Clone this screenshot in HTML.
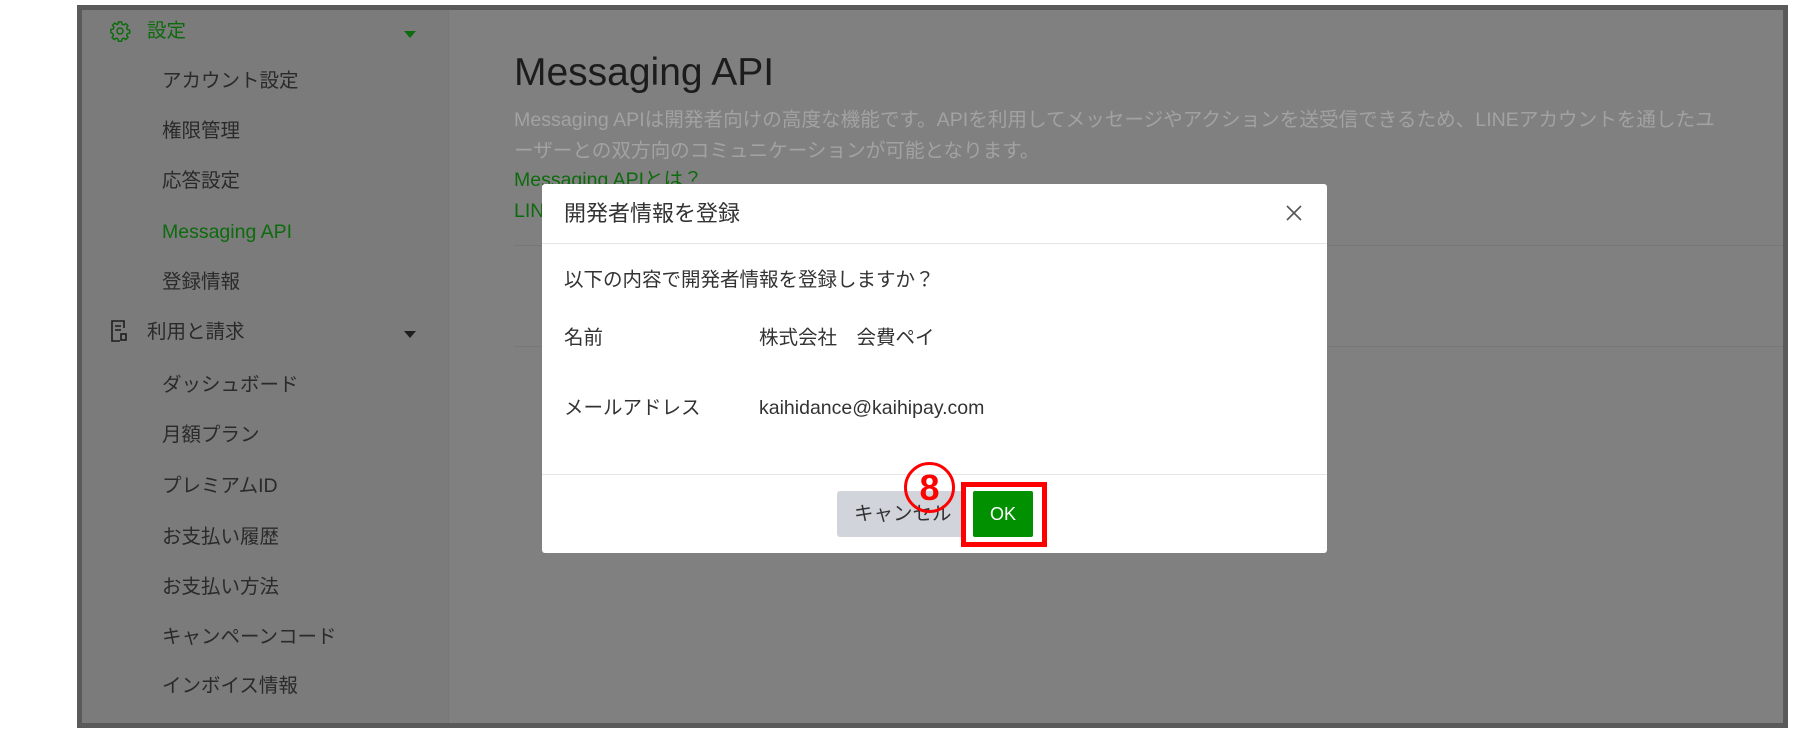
<!DOCTYPE html>
<html><head><meta charset="utf-8"><style>
*{margin:0;padding:0;box-sizing:border-box}
body{width:1802px;height:735px;background:#fff;position:relative;overflow:hidden;font-family:"Liberation Sans","Noto Sans CJK JP",sans-serif}
.frame{position:absolute;left:77px;top:5px;width:1711px;height:723px;border:5px solid #5a5a5a;background:#808080;overflow:hidden}
.side{position:absolute;left:0;top:0;width:367px;height:100%;background:#7b7b7b;border-right:1px solid #777}
.a{position:absolute;font-size:19.5px;color:#2a2a2a;white-space:nowrap;line-height:24px}
.g{color:#0d6b0d}
.caret{position:absolute;width:0;height:0;border-left:6px solid transparent;border-right:6px solid transparent;border-top:7px solid #0d6b0d}
.caret.k{border-top-color:#1e1e1e}
.abs{position:absolute}
.m{color:#333;font-size:19.5px}
</style></head><body>
<div class="frame">
 <div class="side">
  <svg class="abs" style="left:27px;top:10px" width="22" height="22" viewBox="0 0 24 24" fill="none" stroke="#0d6b0d" stroke-width="1.6" stroke-linejoin="round"><path d="M10.3 2h3.4l.5 2.6 1.9.8 2.2-1.5 2.4 2.4-1.5 2.2.8 1.9 2.6.5v3.4l-2.6.5-.8 1.9 1.5 2.2-2.4 2.4-2.2-1.5-1.9.8-.5 2.6h-3.4l-.5-2.6-1.9-.8-2.2 1.5-2.4-2.4 1.5-2.2-.8-1.9L2 13.7v-3.4l2.6-.5.8-1.9-1.5-2.2 2.4-2.4 2.2 1.5 1.9-.8z"/><circle cx="12" cy="12" r="3.3"/></svg>
  <div class="a g" style="left:65px;top:9px">設定</div>
  <div class="caret" style="left:322px;top:21px"></div>
  <div class="a" style="left:80px;top:59px">アカウント設定</div>
  <div class="a" style="left:80px;top:109px">権限管理</div>
  <div class="a" style="left:80px;top:159px">応答設定</div>
  <div class="a g" style="left:80px;top:210px">Messaging API</div>
  <div class="a" style="left:80px;top:260px">登録情報</div>
  <svg class="abs" style="left:28px;top:309px" width="18" height="24" viewBox="0 0 18 24" fill="none" stroke="#1e1e1e" stroke-width="1.6"><path d="M14 9V2H2v20h8"/><path d="M5 7h6M5 11h6"/><rect x="11" y="15" width="5" height="6"/></svg>
  <div class="a" style="left:65px;top:310px">利用と請求</div>
  <div class="caret k" style="left:322px;top:321px"></div>
  <div class="a" style="left:80px;top:363px">ダッシュボード</div>
  <div class="a" style="left:80px;top:413px">月額プラン</div>
  <div class="a" style="left:80px;top:464px">プレミアムID</div>
  <div class="a" style="left:80px;top:515px">お支払い履歴</div>
  <div class="a" style="left:80px;top:565px">お支払い方法</div>
  <div class="a" style="left:80px;top:615px">キャンペーンコード</div>
  <div class="a" style="left:80px;top:664px">インボイス情報</div>
 </div>
 <div class="a" style="left:432px;top:40px;font-size:39px;line-height:46px;color:#1c1c1c">Messaging API</div>
 <div class="a" style="left:432px;top:95px;color:#a2a2a2;line-height:31px;font-size:19.6px">Messaging APIは開発者向けの高度な機能です。APIを利用してメッセージやアクションを送受信できるため、LINEアカウントを通したユ<br>ーザーとの双方向のコミュニケーションが可能となります。</div>
 <div class="a g" style="left:432px;top:158px">Messaging APIとは？</div>
 <div class="a g" style="left:432px;top:189px">LINE</div>
 <div class="abs" style="left:432px;top:235px;width:1290px;height:1px;background:#777"></div>
 <div class="abs" style="left:432px;top:336px;width:1290px;height:1px;background:#777"></div>
</div>
<div class="abs" style="left:542px;top:184px;width:785px;height:369px;background:#fff;border-radius:3px">
 <div class="a" style="left:22px;top:16px;font-size:22px;line-height:28px;color:#333">開発者情報を登録</div>
 <svg class="abs" style="left:744px;top:21px" width="16" height="16" viewBox="0 0 16 16" stroke="#555" stroke-width="1.6"><path d="M1 1l14 14M15 1L1 15"/></svg>
 <div class="abs" style="left:0;top:59px;width:100%;height:1px;background:#e6e6e6"></div>
 <div class="a m" style="left:22px;top:84px">以下の内容で開発者情報を登録しますか？</div>
 <div class="a m" style="left:22px;top:142px">名前</div>
 <div class="a m" style="left:217px;top:142px">株式会社　会費ペイ</div>
 <div class="a m" style="left:22px;top:212px">メールアドレス</div>
 <div class="a m" style="left:217px;top:212px">kaihidance@kaihipay.com</div>
 <div class="abs" style="left:0;top:290px;width:100%;height:1px;background:#e6e6e6"></div>
 <div class="abs" style="left:295px;top:307px;width:140px;height:46px;background:#d1d5db;border-radius:3px"></div>
 <div class="a m" style="left:312px;top:318px">キャンセル</div>
 <div class="abs" style="left:419px;top:298px;width:86px;height:65px;border:5px solid #f00;background:#fff"></div>
 <div class="abs" style="left:431px;top:307px;width:60px;height:46px;background:#009000;border-radius:2px;color:#fff;font-size:18px;text-align:center;line-height:46px">OK</div>
 <div class="abs" style="left:362px;top:278px;width:51px;height:51px;border:3px solid #f00;border-radius:50%;color:#f00;font-weight:bold;font-size:36px;text-align:center;line-height:45px">8</div>
</div>
</body></html>
